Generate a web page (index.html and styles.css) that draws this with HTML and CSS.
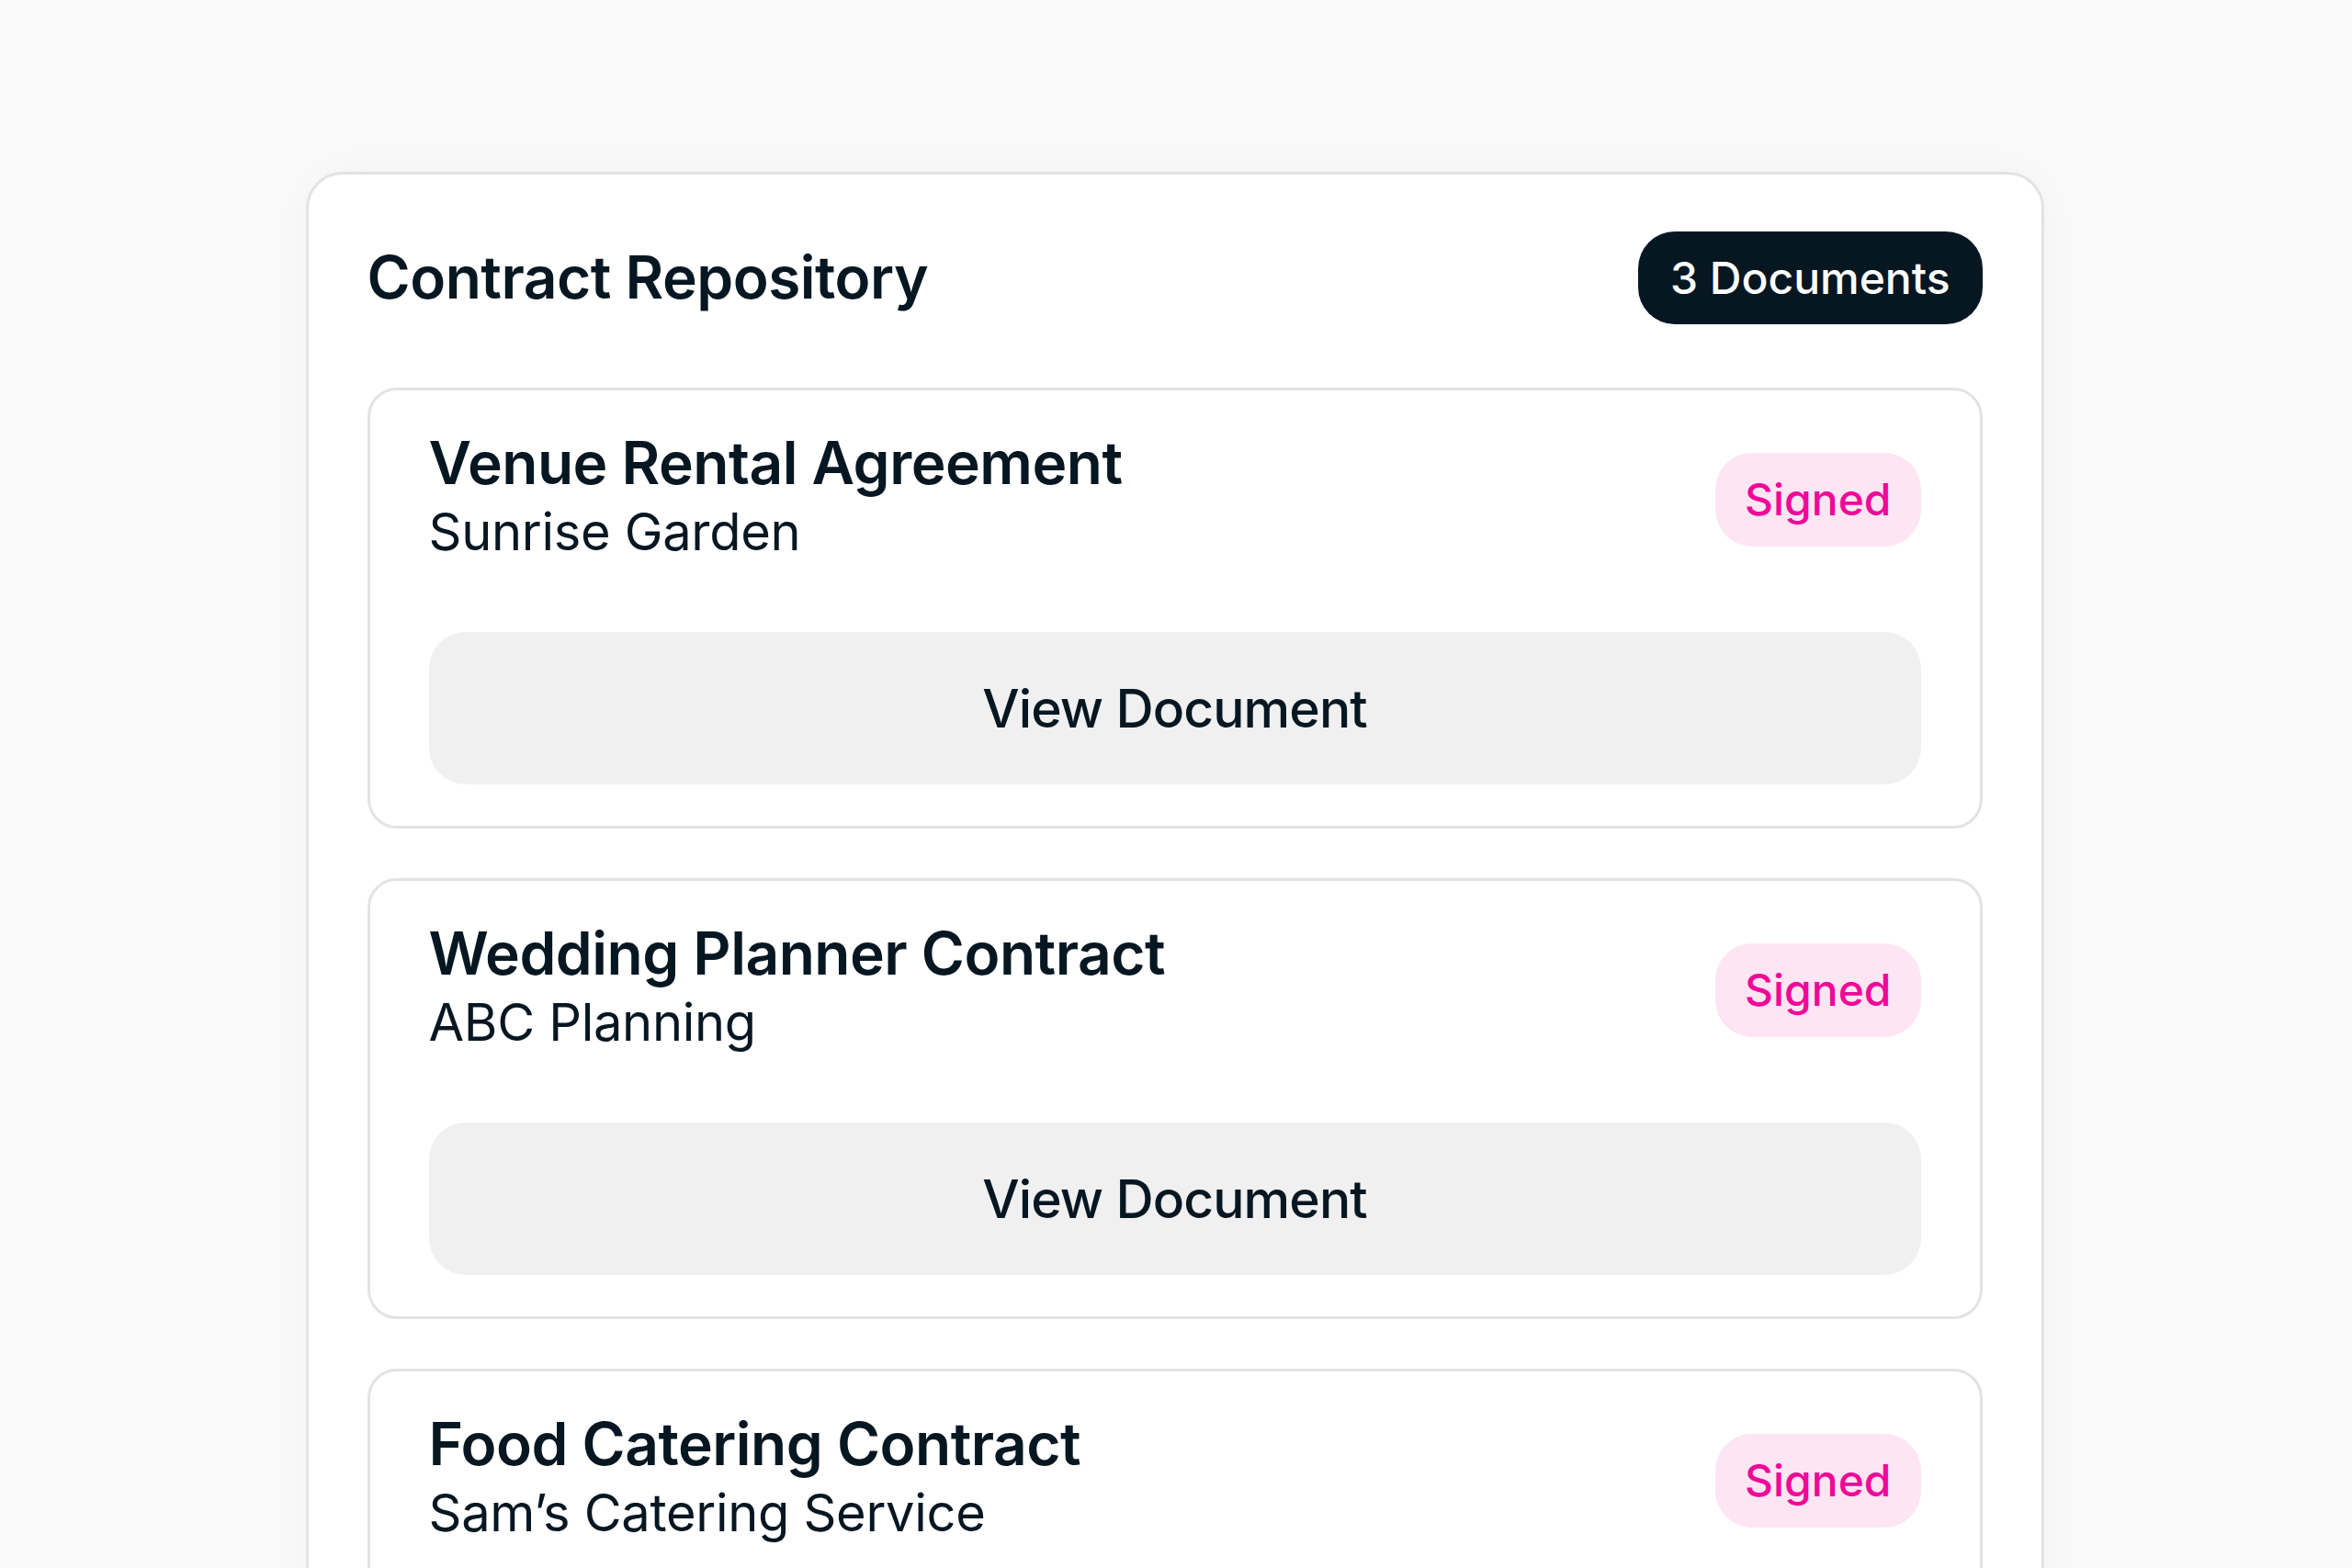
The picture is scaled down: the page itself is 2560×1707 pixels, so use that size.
FILE: index.html
```html
<!DOCTYPE html>
<html lang="en">
<head>
    <meta charset="UTF-8">
    <meta name="viewport" content="width=device-width, initial-scale=1.0">
    <title>Contract Repository</title>
    <link rel="stylesheet" href="styles.css">
</head>
<body>
    <div class="repo">
        <div class="repo-header">
            <h1>Contract Repository</h1>
            <span class="count">3 Documents</span>
        </div>

        <div class="doc-list">
            <div class="doc-card">
                <div class="doc-top">
                    <div class="doc-info">
                        <div class="doc-title">Venue Rental Agreement</div>
                        <div class="doc-vendor">Sunrise Garden</div>
                    </div>
                    <span class="status">Signed</span>
                </div>
                <button class="view-btn">View Document</button>
            </div>

            <div class="doc-card">
                <div class="doc-top">
                    <div class="doc-info">
                        <div class="doc-title">Wedding Planner Contract</div>
                        <div class="doc-vendor">ABC Planning</div>
                    </div>
                    <span class="status">Signed</span>
                </div>
                <button class="view-btn">View Document</button>
            </div>

            <div class="doc-card">
                <div class="doc-top">
                    <div class="doc-info">
                        <div class="doc-title">Food Catering Contract</div>
                        <div class="doc-vendor">Sam’s Catering Service</div>
                    </div>
                    <span class="status">Signed</span>
                </div>
                <button class="view-btn">View Document</button>
            </div>
        </div>
    </div>
</body>
</html>
```

FILE: styles.css
```css
body {
    font-family: Inter, 'Liberation Sans', sans-serif;
    margin: 0;
    padding-top: 187px;
    background-color: #fafafa;
    color: #061722;
    display: flex;
    justify-content: center;
}

.repo {
    width: 1892px;
    box-sizing: border-box;
    margin-right: 3px;
    background-color: white;
    border: 3px solid #e3e3e3;
    border-radius: 40px;
    padding: 62px 64px 64px;
    box-shadow: 0 0 70px rgba(0, 0, 0, 0.035);
}

.repo-header {
    display: flex;
    justify-content: space-between;
    align-items: center;
    margin-bottom: 69px;
}

h1 {
    margin: 0;
    font-size: 64px;
    font-weight: 600;
    letter-spacing: -0.5px;
    line-height: 1.2;
}

.count {
    background-color: #071722;
    color: white;
    font-size: 48px;
    font-weight: 500;
    line-height: 101px;
    padding: 0 35px;
    border-radius: 40px;
}

.doc-list {
    display: flex;
    flex-direction: column;
    gap: 54px;
}

/* one contract */
.doc-card {
    border: 3px solid #e3e3e3;
    border-radius: 32px;
    padding: 44px 64px 45px;
}

.doc-top {
    display: flex;
    justify-content: space-between;
    align-items: center;
    margin-bottom: 69px;
}

.doc-title {
    font-size: 64px;
    font-weight: 600;
    letter-spacing: -0.5px;
    line-height: 70px;
}

.doc-vendor {
    font-size: 56px;
    font-weight: 400;
    letter-spacing: -0.3px;
    line-height: 80px;
}

.status {
    background-color: #fde5f3;
    color: #ef0899;
    font-size: 48px;
    font-weight: 500;
    line-height: 102px;
    padding: 0 32px;
    border-radius: 40px;
}

.view-btn {
    display: block;
    width: 100%;
    height: 166px;
    border: none;
    border-radius: 40px;
    background-color: #f0f0f0;
    color: #061722;
    font-family: inherit;
    font-size: 57px;
    font-weight: 500;
    letter-spacing: -0.9px;
    cursor: pointer;
}
```
